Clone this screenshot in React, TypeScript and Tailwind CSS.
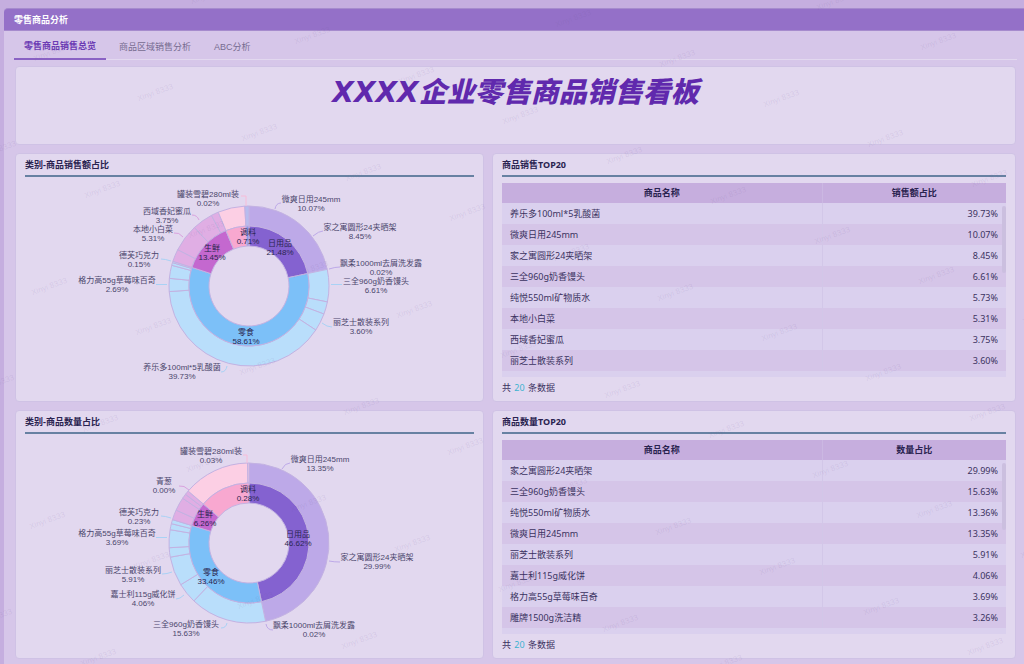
import React from "react";

type Slice = { from: number; to: number; color: string };
type Label = { x: number; y: number; name: string; value: string; line?: string; stroke?: string };
type Row = [string, string];

const LILAC = "#bda9e8";
const SKY = "#b9defb";
const ORCHID = "#e0aee4";
const ROSE = "#fccfe4";
const SKY_LINE = "#a9d2f5";
const ORCHID_LINE = "#d9a2de";
const ROSE_LINE = "#f7bcd8";

function split(stops: number[], color: string): Slice[] {
  return stops.slice(1).map((to, i) => ({ from: stops[i], to, color }));
}

const salesInner: Slice[] = [
  { from: 0, to: 78, color: "#8462d0" },
  { from: 78, to: 288, color: "#7cc0f8" },
  { from: 288, to: 337.4, color: "#c468cf" },
  { from: 337.4, to: 357, color: "#f8a8d0" },
  { from: 357, to: 360, color: "#8f98e4" },
];
const salesOuter: Slice[] = [
  ...split([0, 78], LILAC),
  ...split([78, 101.5, 110.5, 123.4, 266, 275.5, 285, 287, 288], SKY),
  ...split([288, 297, 317, 332, 337.4], ORCHID),
  ...split([337.4, 357], ROSE),
  ...split([357, 360], "#b8bcee"),
];
const salesLabels: Label[] = [
  { x: -41, y: -92, name: "罐装雪碧280ml装", value: "0.02%", line: "M-8 -90H-3V-80", stroke: ROSE_LINE },
  { x: 62, y: -87, name: "微爽日用245mm", value: "10.07%", line: "M26 -77Q27 -83 32 -83", stroke: LILAC },
  { x: 111, y: -59, name: "家之寓圆形24夹晒架", value: "8.45%", line: "M64 -50Q70 -55 74 -55", stroke: LILAC },
  { x: 132, y: -23, name: "飘柔1000ml去屑洗发露", value: "0.02%", line: "M80 -17Q86 -19 91 -19", stroke: LILAC },
  { x: 127, y: -5, name: "三全960g奶香馒头", value: "6.61%", line: "M82 -1.5H93", stroke: SKY_LINE },
  { x: 112, y: 36, name: "丽芝士散装系列", value: "3.60%", line: "M73 37Q78 41 83 41", stroke: SKY_LINE },
  { x: -67, y: 81, name: "养乐多100ml*5乳酸菌", value: "39.73%", line: "M-22 80Q-23 86 -28 86", stroke: SKY_LINE },
  { x: -132, y: -6, name: "格力高55g草莓味百奇", value: "2.69%", line: "M-82 -1.5H-93", stroke: SKY_LINE },
  { x: -110, y: -31, name: "德芙巧克力", value: "0.15%", line: "M-78 -25Q-84 -27 -88 -27", stroke: SKY_LINE },
  { x: -96, y: -57, name: "本地小白菜", value: "5.31%", line: "M-66 -49Q-70 -54 -75 -53", stroke: ORCHID_LINE },
  { x: -82, y: -75, name: "西域香妃蜜瓜", value: "3.75%", line: "M-50 -66Q-52 -71 -57 -71", stroke: ORCHID_LINE },
  { x: 31, y: -43, name: "日用品", value: "21.48%" },
  { x: -3, y: 46, name: "零食", value: "58.61%" },
  { x: -37, y: -38, name: "生鲜", value: "13.45%" },
  { x: -1, y: -54, name: "调料", value: "0.71%" },
];

const countInner: Slice[] = [
  { from: 0, to: 168, color: "#8462d0" },
  { from: 168, to: 287, color: "#7cc0f8" },
  { from: 287, to: 310.5, color: "#c468cf" },
  { from: 310.5, to: 360, color: "#f8a8d0" },
];
const countOuter: Slice[] = [
  ...split([0, 168], LILAC),
  ...split([168, 223.6, 238.6, 259.8, 266.6, 279.6, 284, 287], SKY),
  ...split([287, 294.3, 304, 307.5, 310.5], ORCHID),
  ...split([310.5, 359, 360], ROSE),
];
const countLabels: Label[] = [
  { x: -38, y: -92, name: "罐装雪碧280ml装", value: "0.03%", line: "M-6 -88H-2V-80", stroke: ROSE_LINE },
  { x: 71, y: -84, name: "微爽日用245mm", value: "13.35%", line: "M33 -74Q36 -80 41 -80", stroke: LILAC },
  { x: 128, y: 14, name: "家之寓圆形24夹晒架", value: "29.99%", line: "M80 18Q85 19 91 19", stroke: LILAC },
  { x: 65, y: 82, name: "飘柔1000ml去屑洗发露", value: "0.02%", line: "M17 81Q18 87 24 87", stroke: LILAC },
  { x: -63, y: 81, name: "三全960g奶香馒头", value: "15.63%", line: "M-22 80Q-23 85 -28 85", stroke: SKY_LINE },
  { x: -106, y: 51, name: "嘉士利115g威化饼", value: "4.06%", line: "M-65 52Q-69 56 -73 56", stroke: SKY_LINE },
  { x: -116, y: 27, name: "丽芝士散装系列", value: "5.91%", line: "M-77 29Q-82 31 -87 31", stroke: SKY_LINE },
  { x: -132, y: -10, name: "格力高55g草莓味百奇", value: "3.69%", line: "M-82 -5.5H-93", stroke: SKY_LINE },
  { x: -110, y: -31, name: "德芙巧克力", value: "0.23%", line: "M-78 -25Q-84 -27 -88 -27", stroke: SKY_LINE },
  { x: -85, y: -62, name: "青葱", value: "0.00%", line: "M-60 -53Q-65 -58 -70 -57", stroke: ORCHID_LINE },
  { x: 49, y: -9, name: "日用品", value: "46.62%" },
  { x: -38, y: 29, name: "零食", value: "33.46%" },
  { x: -44, y: -29, name: "生鲜", value: "6.26%" },
  { x: -1, y: -54, name: "调料", value: "0.28%" },
];

const salesRows: Row[] = [
  ["养乐多100ml*5乳酸菌", "39.73%"],
  ["微爽日用245mm", "10.07%"],
  ["家之寓圆形24夹晒架", "8.45%"],
  ["三全960g奶香馒头", "6.61%"],
  ["纯悦550ml矿物质水", "5.73%"],
  ["本地小白菜", "5.31%"],
  ["西域香妃蜜瓜", "3.75%"],
  ["丽芝士散装系列", "3.60%"],
];
const countRows: Row[] = [
  ["家之寓圆形24夹晒架", "29.99%"],
  ["三全960g奶香馒头", "15.63%"],
  ["纯悦550ml矿物质水", "13.36%"],
  ["微爽日用245mm", "13.35%"],
  ["丽芝士散装系列", "5.91%"],
  ["嘉士利115g威化饼", "4.06%"],
  ["格力高55g草莓味百奇", "3.69%"],
  ["雕牌1500g洗洁精", "3.26%"],
];

function point(r: number, deg: number) {
  const a = (deg * Math.PI) / 180;
  return `${(r * Math.sin(a)).toFixed(2)} ${(-r * Math.cos(a)).toFixed(2)}`;
}

function arc({ from, to }: Slice, r0: number, r1: number) {
  const large = to - from > 180 ? 1 : 0;
  return `M${point(r1, from)}A${r1} ${r1} 0 ${large} 1 ${point(r1, to)}L${point(r0, to)}A${r0} ${r0} 0 ${large} 0 ${point(r0, from)}Z`;
}

function Sunburst({ title, inner, outer, labels }: { title: string; inner: Slice[]; outer: Slice[]; labels: Label[] }) {
  return (
    <svg role="img" aria-label={title} viewBox="-224 -106 449 216" className="mt-[3px] h-[216px] w-full shrink-0 overflow-visible">
      <g stroke="#c3b2e2" strokeWidth="1">
        {outer.map((s, i) => (
          <path key={i} d={arc(s, 60, 80)} fill={s.color} />
        ))}
        {inner.map((s, i) => (
          <path key={i} d={arc(s, 40, 60)} fill={s.color} />
        ))}
      </g>
      {labels.map((l) => (
        <g key={l.name}>
          {l.line && <path d={l.line} fill="none" stroke={l.stroke} strokeWidth="1" />}
          <text
            textAnchor="middle"
            className={
              l.line
                ? "fill-[#4b466c] font-['Liberation_Sans','Noto_Sans_CJK_SC',sans-serif] text-[8px]"
                : "fill-[#2b2650] font-['Liberation_Sans','Noto_Sans_CJK_SC',sans-serif] text-[8px]"
            }
          >
            <tspan x={l.x} y={l.y + 3}>{l.name}</tspan>
            <tspan x={l.x} y={l.y + 12}>{l.value}</tspan>
          </text>
        </g>
      ))}
    </svg>
  );
}

function Card({ title, children }: { title: string; children: React.ReactNode }) {
  return (
    <section className="flex h-[249px] min-w-0 flex-col rounded border border-[#cfc2e5] bg-[#e2d8ef] px-[9px]">
      <h2 className="h-[23px] shrink-0 border-b-2 border-[#6781a2] font-['Noto_Sans','Noto_Sans_CJK_SC',sans-serif] text-[9px] leading-[21px] font-bold text-[#2a2350]">
        {title}
      </h2>
      {children}
    </section>
  );
}

function RankTable({ valueTitle, rows }: { valueTitle: string; rows: Row[] }) {
  return (
    <>
      <div className="relative mt-[6px] h-[194px] shrink-0 overflow-hidden bg-[#dad0ee]">
        <table className="w-full table-fixed border-collapse text-[9px] text-[#3a3260]">
          <thead>
            <tr className="h-5 bg-[#c6aede] text-[#2a2350]">
              <th className="w-[63.5%] border-r border-[#cbb8e2] p-0 font-bold">商品名称</th>
              <th className="p-0 font-bold">{valueTitle}</th>
            </tr>
          </thead>
          <tbody>
            {rows.map(([name, value]) => (
              <tr key={name} className="h-[21px] odd:bg-[#dad0ee] even:bg-[#d5c5e8]">
                <td className="border-r border-[#d2c7e8] p-0 pl-2">{name}</td>
                <td className="p-0 pr-2 text-right">{value}</td>
              </tr>
            ))}
          </tbody>
        </table>
        <div className="absolute top-[23px] right-0 h-[67px] w-1 rounded-full bg-[#cbbfdf]" />
      </div>
      <p className="text-[9px] leading-[22px] text-[#3a3260]">
        共 <span className="px-px text-[#3eb3cf]">20</span> 条数据
      </p>
    </>
  );
}

function Watermark() {
  const marks: [number, number][] = [];
  for (let m = -8; m <= 18; m++) {
    for (let n = -8; n <= 12; n++) {
      const x = 155 + 104 * m + 157 * n;
      const y = 92 + 40 * m - 57 * n;
      if (x > -30 && x < 1060 && y > -10 && y < 680) marks.push([x, y]);
    }
  }
  return (
    <svg aria-hidden="true" className="pointer-events-none absolute inset-0 h-full w-full">
      {marks.map(([x, y]) => (
        <text
          key={`${x},${y}`}
          textAnchor="middle"
          transform={`translate(${x} ${y}) rotate(-20)`}
          className="fill-[#6a5490]/12 font-['Liberation_Sans',sans-serif] text-[8px]"
          y="3"
        >
          Xinyi 8333
        </text>
      ))}
    </svg>
  );
}

const tabs = ["零售商品销售总览", "商品区域销售分析", "ABC分析"];

export default function App() {
  return (
    <div className="relative flex min-h-screen flex-col overflow-hidden bg-[#c5aedf] pt-2 pl-1 font-['Noto_Sans','Noto_Sans_CJK_SC',sans-serif]">
      <main className="flex flex-1 flex-col rounded-tl bg-[#d6c6e9]">
        <header className="h-[23px] rounded-tl border-y border-t-[#a68bcd] border-b-[#a68bcd] bg-[#9470c8] pl-[10px]">
          <h1 className="text-[9px] leading-[21px] font-bold text-white">零售商品分析</h1>
        </header>
        <div className="flex flex-1 flex-col pr-[7px] pb-[5px] pl-[10px]">
          <nav className="flex h-[29px] items-stretch gap-[13px] border-b border-[#e2d8ef] font-['Liberation_Sans','Noto_Sans_CJK_SC',sans-serif] text-[9px]">
            {tabs.map((t, i) => (
              <button
                key={t}
                type="button"
                className={
                  i === 0
                    ? "-mb-px border-b-2 border-[#8a62c4] px-[10px] pt-[5px] font-bold text-[#6c3bb4]"
                    : "mr-[10px] pt-[5px] text-[#776c90]"
                }
              >
                {t}
              </button>
            ))}
          </nav>
          <div className="mt-[6px] mr-px ml-px grid grid-cols-[469fr_524fr] gap-2">
            <section className="col-span-2 h-[79px] rounded border border-[#cfc2e5] bg-[#e2d8ef] pt-2 text-center">
              <h2 className="font-['DejaVu_Sans','Noto_Sans_CJK_SC',sans-serif] text-[28px] leading-9 font-black text-[#6029ad] italic">
                XXXX企业零售商品销售看板
              </h2>
            </section>
            <Card title="类别-商品销售额占比">
              <Sunburst title="类别-商品销售额占比" inner={salesInner} outer={salesOuter} labels={salesLabels} />
            </Card>
            <Card title="商品销售TOP20">
              <RankTable valueTitle="销售额占比" rows={salesRows} />
            </Card>
            <Card title="类别-商品数量占比">
              <Sunburst title="类别-商品数量占比" inner={countInner} outer={countOuter} labels={countLabels} />
            </Card>
            <Card title="商品数量TOP20">
              <RankTable valueTitle="数量占比" rows={countRows} />
            </Card>
          </div>
        </div>
      </main>
      <Watermark />
    </div>
  );
}
